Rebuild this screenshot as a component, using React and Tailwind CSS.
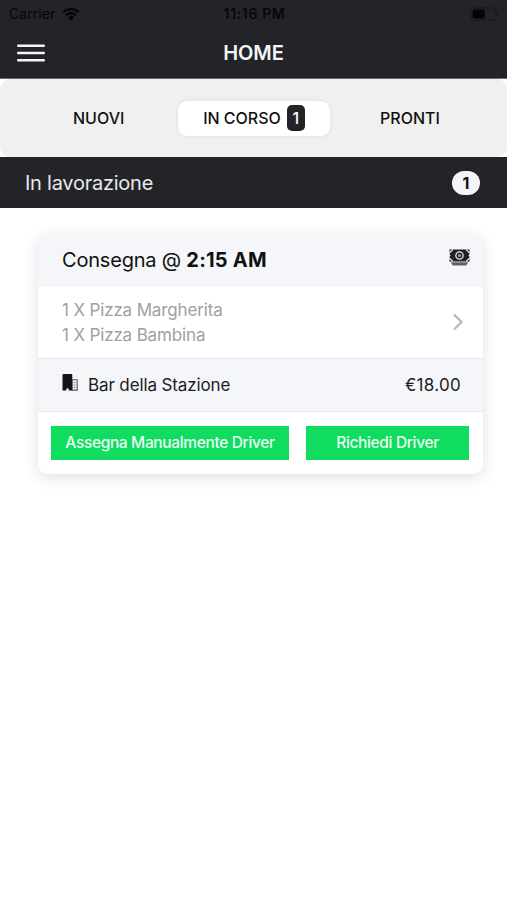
const order = {
  time: '2:15 AM',
  items: ['1 X Pizza Margherita', '1 X Pizza Bambina'],
  customer: 'Bar della Stazione',
  total: '€18.00',
};

function WifiIcon() {
  return (
    <svg width="18" height="14" viewBox="0 0 18 14" fill="none" stroke="#050506" strokeWidth="2.3">
      <path d="M1.2 5.3a11 11 0 0 1 15.6 0" />
      <path d="M4 8.3a7 7 0 0 1 10 0" />
      <path d="M9 13.4 6 10.3a4.3 4.3 0 0 1 6 0z" fill="#050506" stroke="none" />
    </svg>
  );
}

function BatteryIcon() {
  return (
    <svg width="30" height="14" viewBox="0 0 30 14">
      <rect x="1" y="0.8" width="25" height="12.4" rx="3" fill="none" stroke="#1a1b1e" strokeWidth="1.2" />
      <rect x="2.6" y="2.6" width="12" height="8.8" rx="1.5" fill="#050506" />
      <path d="M27.4 5v4c1-.3 1.5-1 1.5-2s-.5-1.7-1.5-2z" fill="#1a1b1e" />
    </svg>
  );
}

function MenuIcon() {
  return (
    <svg width="28" height="18" viewBox="0 0 28 18" fill="none" stroke="#f4f5f8" strokeWidth="2.4" strokeLinecap="round">
      <path d="M1.2 1.8h25.6M1.2 9h25.6M1.2 16.2h25.6" />
    </svg>
  );
}

function CashIcon() {
  return (
    <svg width="21" height="17" viewBox="0 0 21 17">
      <path d="M0.5 0.5h20v12h-20z" fill="#1f2023" />
      {/* cut corners and side notches of the banknote */}
      <path d="M0.2 4.1 3.9 0.6M20.8 4.1 17.1 0.6M0.2 8.9l3.700 3.500M20.800 8.900l-3.700 3.500" fill="none" stroke="#f4f6fa" strokeWidth="1.2" />
      <path d="M0 5 1.700 6.500 0 8zM21 5l-1.700 1.500L21 8z" fill="#f4f6fa" />
      <path d="M10.500 2.200a4.300 4.300 0 1 1 0 8.600 4.300 4.300 0 0 1 0-8.600z" fill="#e4e6ea" />
      <circle cx="10.5" cy="6.5" r="3" fill="#1f2023" />
      <circle cx="10.5" cy="6.5" r="1.5" fill="#a4a6aa" />
      <path d="M1.800 13.300h17.400l-1.900 3.200H3.700z" fill="#606266" />
    </svg>
  );
}

function BuildingIcon() {
  return (
    <svg width="16" height="17" viewBox="0 0 16 17">
      <path d="M10 5.8h5.2v10.3H10z" fill="#f4f6fa" stroke="#55575b" strokeWidth="1.1" />
      <path d="M11.5 8.5h2.2M11.5 11h2.2M11.5 13.5h2.2" stroke="#85878b" strokeWidth="1" />
      <path d="M1.3 0h8.2l.8.8v15.7H6.7v-2H4.3v2H0.5V.8z" fill="#141517" />
    </svg>
  );
}

function StatusBar() {
  return (
    <div className="grid h-7 grid-cols-3 items-center pl-[9px] pr-[7px] text-[14px] leading-none text-[#070708]">
      <div className="flex items-center gap-[7px]">
        <span className="tracking-[0.05px]">Carrier</span>
        <WifiIcon />
      </div>
      <span className="whitespace-nowrap text-center font-semibold tracking-[0.65px]">11:16 PM</span>
      <div className="flex justify-end">
        <BatteryIcon />
      </div>
    </div>
  );
}

function Header() {
  return (
    <header className="h-[79px] border-b border-[#6c6d70] bg-[#232428]">
      <StatusBar />
      <div className="grid h-[49px] grid-cols-3 items-center px-[17px]">
        <MenuIcon />
        <h1 className="text-center text-[20px] font-semibold tracking-[-0.1px] text-[#f4f5f8]">HOME</h1>
      </div>
    </header>
  );
}

function Tabs() {
  return (
    <nav className="grid h-[78px] grid-cols-[178px_152px_1fr] items-center rounded-[10px] bg-[#f0f0f0] text-[16px] font-medium text-[#111]">
      <span className="pl-[73px]">NUOVI</span>
      <div className="flex h-[35px] items-center justify-center gap-1.5 rounded-[9px] bg-white shadow-[0_0_4px_rgba(0,0,0,0.08)]">
        <span>IN CORSO</span>
        <span className="flex h-[26px] w-[18px] items-center justify-center rounded-[5px] bg-[#232428] text-white">1</span>
      </div>
      <span className="pl-[50px]">PRONTI</span>
    </nav>
  );
}

function OrderCard() {
  return (
    <article className="mr-6 ml-[38px] mt-[25px] overflow-hidden rounded-[10px] bg-white shadow-[0_4px_16px_rgba(0,0,0,0.12)]">
      <div className="flex h-[54px] items-center justify-between bg-[#f4f6fa] pl-6 pr-[13px]">
        <h2 className="text-[20px] text-[#111]">
          <span className="tracking-[-0.2px]">Consegna @ </span>
          <b className="font-bold tracking-[0.2px]">{order.time}</b>
        </h2>
        <div className="mb-1.5">
          <CashIcon />
        </div>
      </div>
      <div className="flex h-[71px] items-center justify-between pl-6 pr-5">
        <div className="text-[17px] leading-[24.5px] tracking-[-0.15px] text-[#a0a0a0]">
          {order.items.map((item) => (
            <p key={item}>{item}</p>
          ))}
        </div>
        <svg className="mb-0.5" width="10" height="18" viewBox="0 0 10 18" fill="none" stroke="#b8b8ba" strokeWidth="2.2">
          <path d="m1 1.5 7.5 7.5L1 16.5" />
        </svg>
      </div>
      <div className="flex h-[54px] items-center border-y border-[#e6e8ec] bg-[#f4f6fa] pl-6 pr-[22px] text-[17px] text-[#1c1c1e]">
        <div className="mb-1.5">
          <BuildingIcon />
        </div>
        <span className="ml-2.5 pt-0.5 tracking-[-0.12px]">{order.customer}</span>
        <span className="ml-auto pt-0.5 tracking-[0.3px]">{order.total}</span>
      </div>
      <div className="flex h-[62px] items-center gap-[17px] pl-[13px] pr-3.5 text-[15.5px] font-medium tracking-[-0.35px] text-[#e9fff1]">
        <button className="h-[34px] w-[238px] whitespace-nowrap bg-[#10dc60]">Assegna Manualmente Driver</button>
        <button className="h-[34px] flex-1 whitespace-nowrap bg-[#10dc60]">Richiedi Driver</button>
      </div>
    </article>
  );
}

export default function App() {
  return (
    <div className="h-[900px] w-full overflow-hidden bg-white font-['Inter',sans-serif]">
      <Header />
      <Tabs />
      <div className="flex h-[51px] items-center justify-between bg-[#232428] pl-[25px] pr-[27px]">
        <span className="text-[20px] tracking-[-0.25px] text-[#e8e9ec]">In lavorazione</span>
        <span className="flex h-6 w-7 items-center justify-center rounded-full bg-[#f4f5f8] text-[16px] font-bold text-[#111]">1</span>
      </div>
      <OrderCard />
    </div>
  );
}
